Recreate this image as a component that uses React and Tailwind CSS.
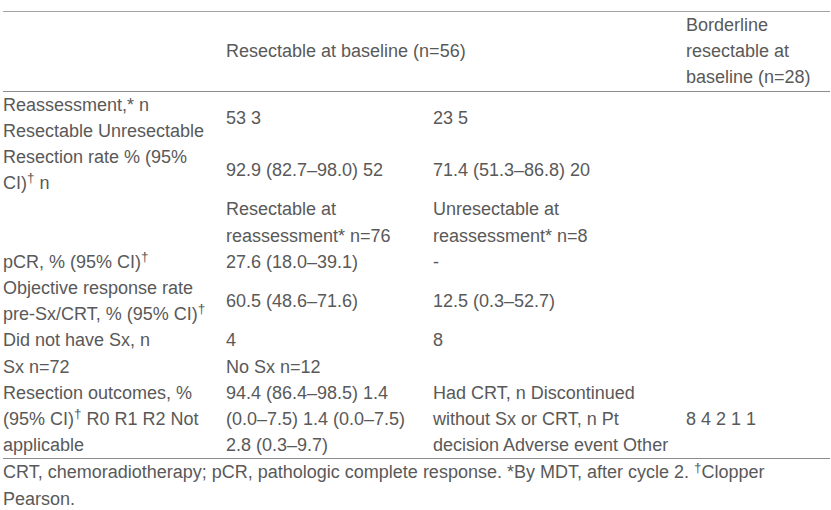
import React from "react";

const rows = [
  {
    label: <>Reassessment,* n Resectable Unresectable</>,
    cells: ["53 3", "23 5", ""],
  },
  {
    label: (
      <>
        Resection rate % (95% CI)<sup>†</sup> n
      </>
    ),
    cells: ["92.9 (82.7–98.0) 52", "71.4 (51.3–86.8) 20", ""],
  },
  {
    label: "",
    cells: ["Resectable at reassessment* n=76", "Unresectable at reassessment* n=8", ""],
  },
  {
    label: (
      <>
        pCR, % (95% CI)<sup>†</sup>
      </>
    ),
    cells: ["27.6 (18.0–39.1)", "-", ""],
  },
  {
    label: (
      <>
        Objective response rate pre-Sx/CRT, % (95% CI)<sup>†</sup>
      </>
    ),
    cells: ["60.5 (48.6–71.6)", "12.5 (0.3–52.7)", ""],
  },
  {
    label: "Did not have Sx, n",
    cells: ["4", "8", ""],
  },
  {
    label: "Sx n=72",
    cells: ["No Sx n=12", "", ""],
  },
  {
    label: (
      <>
        Resection outcomes, % (95% CI)<sup>†</sup> R0 R1 R2 Not applicable
      </>
    ),
    cells: [
      "94.4 (86.4–98.5) 1.4 (0.0–7.5) 1.4 (0.0–7.5) 2.8 (0.3–9.7)",
      "Had CRT, n Discontinued without Sx or CRT, n Pt decision Adverse event Other",
      "8 4 2 1 1",
    ],
  },
];

const cell = "p-0 pr-[6px] align-middle text-left font-normal";

export default function App() {
  return (
    <div className="w-[831px] h-[510px] overflow-hidden bg-white pt-[11px] pl-[3px] font-['Liberation_Sans',Arial,sans-serif] text-[18px] leading-[26.2px] text-[#595959]">
      <table className="w-[827px] table-fixed border-collapse">
        <colgroup>
          <col className="w-[223px]" />
          <col className="w-[207px]" />
          <col className="w-[253px]" />
          <col className="w-[144px]" />
        </colgroup>
        <thead>
          <tr className="border-t border-b border-t-[#a3a3a3] border-b-[#8c8c8c]">
            <th className={cell}></th>
            <th className={cell} colSpan={2}>
              Resectable at baseline (n=56)
            </th>
            <th className={cell}>Borderline resectable at baseline (n=28)</th>
          </tr>
        </thead>
        <tbody className="border-b border-[#8c8c8c]">
          {rows.map((row, i) => (
            <tr key={i}>
              <td className={cell}>{row.label}</td>
              {row.cells.map((c, j) => (
                <td key={j} className={cell}>
                  {c}
                </td>
              ))}
            </tr>
          ))}
        </tbody>
      </table>
      <p className="w-[827px]">
        CRT, chemoradiotherapy; pCR, pathologic complete response. *By MDT, after cycle 2.{" "}
        <sup>†</sup>Clopper Pearson.
      </p>
    </div>
  );
}
